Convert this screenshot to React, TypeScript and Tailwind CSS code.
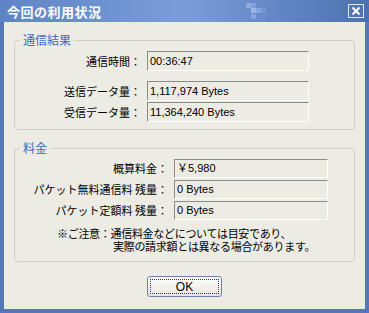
import React from "react";

const jp = "font-['MS_UI_Gothic','Noto_Sans_CJK_JP',sans-serif]";
const latin = "font-['Liberation_Sans','Noto_Sans_CJK_JP',sans-serif]";

interface FieldRowProps {
  label: string;
  value: string;
  labelWidth: string;
  boxWidth: string;
  height: string;
}

const FieldRow: React.FC<FieldRowProps> = ({ label, value, labelWidth, boxWidth, height }) => (
  <div className={`flex items-center ${height}`}>
    <div className={`${labelWidth} pr-[6px] text-right text-[11px] leading-[13px] text-black whitespace-nowrap ${jp}`}>
      {label}
    </div>
    <div
      className={`${boxWidth} h-full flex items-center pl-[2px] border-t border-l border-t-[#8c8c86] border-l-[#8c8c86] border-b border-r border-b-white border-r-white text-[11px] text-black ${latin}`}
    >
      {value}
    </div>
  </div>
);

const TitlePattern = () => (
  <svg width="26" height="18" viewBox="0 0 26 18" className="shrink-0">
    <rect x="0" y="1" width="5" height="5" fill="#8fabe0" />
    <rect x="5" y="1" width="5" height="5" fill="#7f9fda" />
    <rect x="5" y="6" width="5" height="5" fill="#9ab4e6" />
    <rect x="10" y="6" width="5" height="5" fill="#88a6de" />
    <rect x="15" y="6" width="5" height="5" fill="#7897d2" />
    <rect x="5" y="12" width="5" height="5" fill="#86a3da" />
    <rect x="15" y="12" width="5" height="5" fill="#6f8fcc" />
  </svg>
);

export default function App() {
  return (
    <div className="w-[369px] h-[313px] flex flex-col bg-[#5577b8] overflow-hidden">
      {/* title bar */}
      <div className="h-[22px] flex items-center bg-gradient-to-r from-[#5f84c5] via-[#7b9dd9] to-[#4d70af] pl-[7px] pr-[5px]">
        <span className={`text-[13px] font-bold text-white leading-none tracking-[0.5px] ${jp}`}>今回の利用状況</span>
        <div className="ml-[144px]">
          <TitlePattern />
        </div>
        <div className="ml-auto w-[16px] h-[14px] border border-[#dfe8f7] flex items-center justify-center">
          <svg width="10" height="10" viewBox="0 0 10 10">
            <path d="M1.5 1.5 L8.5 8.5 M8.5 1.5 L1.5 8.5" stroke="#ffffff" strokeWidth="2" />
          </svg>
        </div>
      </div>

      {/* client area */}
      <div className="mx-[4px] mb-[4px] flex-1 bg-[#ecebe4] pt-[11px] flex flex-col">
        <fieldset className="mx-[10px] border border-[#d0d0c2] rounded-[4px] pt-[4px] pb-[7px]">
          <legend className={`ml-[5px] px-[3px] text-[12px] leading-[14px] text-[#3d6cc0] ${jp}`}>通信結果</legend>
          <FieldRow label="通信時間：" value="00:36:47" labelWidth="w-[132px]" boxWidth="w-[162px]" height="h-[20px]" />
          <div className="flex flex-col gap-[1px] mt-[10px]">
            <FieldRow label="送信データ量：" value="1,117,974 Bytes" labelWidth="w-[132px]" boxWidth="w-[162px]" height="h-[20px]" />
            <FieldRow label="受信データ量：" value="11,364,240 Bytes" labelWidth="w-[132px]" boxWidth="w-[162px]" height="h-[20px]" />
          </div>
        </fieldset>

        <fieldset className="mx-[10px] mt-[11px] border border-[#d0d0c2] rounded-[4px] pt-[4px] pb-[8px]">
          <legend className={`ml-[5px] px-[3px] text-[12px] leading-[14px] text-[#3d6cc0] ${jp}`}>料金</legend>
          <div className="flex flex-col gap-[2px]">
            <FieldRow label="概算料金：" value="￥5,980" labelWidth="w-[159px]" boxWidth="w-[154px]" height="h-[19px]" />
            <FieldRow label="パケット無料通信料 残量：" value="0 Bytes" labelWidth="w-[159px]" boxWidth="w-[154px]" height="h-[19px]" />
            <FieldRow label="パケット定額料 残量：" value="0 Bytes" labelWidth="w-[159px]" boxWidth="w-[154px]" height="h-[19px]" />
          </div>
          <div className={`mt-[7px] pl-[42px] text-[11px] leading-[13px] tracking-[-0.3px] text-black whitespace-nowrap ${jp}`}>
            <div>※ご注意：通信料金などについては目安であり、</div>
            <div className="pl-[56px]">実際の請求額とは異なる場合があります。</div>
          </div>
        </fieldset>

        <div className="mt-[14px] flex justify-center">
          <button className="w-[75px] h-[21px] rounded-[3px] border border-[#6e82a8] bg-gradient-to-b from-white to-[#e6e5dc] p-[2px]">
            <div className={`w-full h-full border border-dotted border-[#4a2a5a] flex items-center justify-center text-[12px] text-black ${latin}`}>
              OK
            </div>
          </button>
        </div>
      </div>
    </div>
  );
}
